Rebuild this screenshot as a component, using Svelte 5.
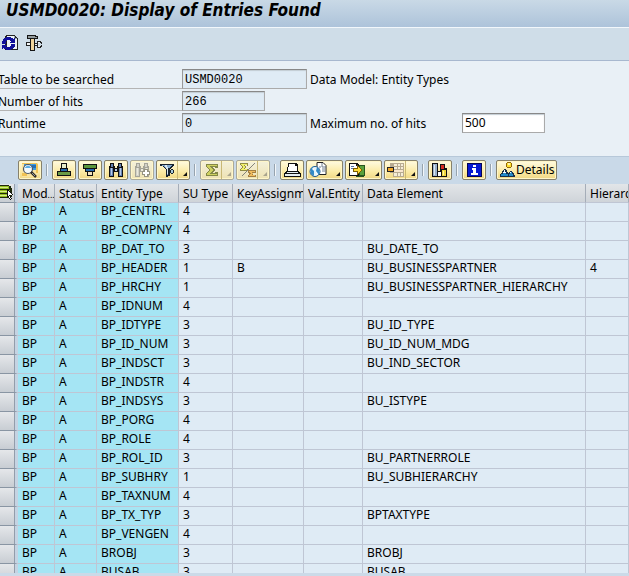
<script>
  const columns = [
    { name: 'Mod', more: true, width: 37 },
    { name: 'Status', width: 42 },
    { name: 'Entity Type', width: 82 },
    { name: 'SU Type', width: 54 },
    { name: 'KeyAssignm', width: 71 },
    { name: 'Val.Entity', width: 59 },
    { name: 'Data Element', width: 223 },
    { name: 'Hierarchy', width: 0 }
  ];

  const entries = [
    ['BP_CENTRL', '4', '', '', ''],
    ['BP_COMPNY', '4', '', '', ''],
    ['BP_DAT_TO', '3', '', 'BU_DATE_TO', ''],
    ['BP_HEADER', '1', 'B', 'BU_BUSINESSPARTNER', '4'],
    ['BP_HRCHY', '1', '', 'BU_BUSINESSPARTNER_HIERARCHY', ''],
    ['BP_IDNUM', '4', '', '', ''],
    ['BP_IDTYPE', '3', '', 'BU_ID_TYPE', ''],
    ['BP_ID_NUM', '3', '', 'BU_ID_NUM_MDG', ''],
    ['BP_INDSCT', '3', '', 'BU_IND_SECTOR', ''],
    ['BP_INDSTR', '4', '', '', ''],
    ['BP_INDSYS', '3', '', 'BU_ISTYPE', ''],
    ['BP_PORG', '4', '', '', ''],
    ['BP_ROLE', '4', '', '', ''],
    ['BP_ROL_ID', '3', '', 'BU_PARTNERROLE', ''],
    ['BP_SUBHRY', '1', '', 'BU_SUBHIERARCHY', ''],
    ['BP_TAXNUM', '4', '', '', ''],
    ['BP_TX_TYP', '3', '', 'BPTAXTYPE', ''],
    ['BP_VENGEN', '4', '', '', ''],
    ['BROBJ', '3', '', 'BROBJ', ''],
    ['BUSAB', '3', '', 'BUSAB', '']
  ];

  const tools = [
    { id: 'find', label: 'Details view' },
    null,
    { id: 'asc', label: 'Sort ascending' },
    { id: 'desc', label: 'Sort descending' },
    { id: 'search', label: 'Find' },
    { id: 'next', label: 'Find next', off: true },
    { id: 'filter', label: 'Filter', menu: 'split' },
    null,
    { id: 'sum', label: 'Total', menu: 'split', off: true },
    { id: 'sub', label: 'Subtotal', menu: 'split', off: true },
    null,
    { id: 'print', label: 'Print' },
    { id: 'view', label: 'Views', menu: 'wide' },
    { id: 'export', label: 'Export', menu: 'wide' },
    { id: 'layout', label: 'Layout', menu: 'split' },
    null,
    { id: 'chart', label: 'Graphic' },
    null,
    { id: 'info', label: 'Information' },
    null,
    { id: 'details', label: 'Details', text: true }
  ];
</script>

{#snippet icon(id)}
  <svg class="icon" viewBox="0 0 18 16" aria-hidden="true" shape-rendering={id === 'find' || id === 'view' ? 'auto' : 'crispEdges'}>
    {#if id === 'find'}
      <path d="M1 1h16v14H1z" fill="#f8e3a0" /><path d="M1 1h15v1H1zM1 11h5v3H1zM15 2h2v9h-2z" fill="#f0c254" />
      <path d="M3 2h12v6H3z" fill="#3d9be0" /><path d="M11 3h4v3h-4z" fill="#2371b9" />
      <circle cx="7" cy="7" r="4.500" fill="#f4fafc" stroke="#4a5662" stroke-width="1.2" />
      <path d="M3.500 6q3.500-5 7 0z" fill="#5aaee8" />
      <path d="M10 10l5 5" stroke="#302a24" stroke-width="2.5" /><path d="M11 11l3 3" stroke="#8c98a4" />
    {:else if id === 'asc'}
      <path d="M6 1h6v5h1v3h3v5H2V9h3V6h1z" fill="#111" />
      <path d="M7 2h4v4H7z" fill="#e8edcb" /><path d="M6 7h6v2H6z" fill="#2669ac" /><path d="M3 10h12v3H3z" fill="#6a9a45" />
    {:else if id === 'desc'}
      <path d="M2 2h14v5h-2v3h-2v4H6v-4H4V7H2z" fill="#111" />
      <path d="M3 3h12v3H3z" fill="#5c963b" /><path d="M5 7h8v2H5z" fill="#2669ac" /><path d="M7 10h4v3H7z" fill="#f0e2bd" />
    {:else if id === 'search' || id === 'next'}
      <g>
        <path d="M3 1h4v3h1v2h2V4h1V1h4v3h1v11h-5v-5H7v5H2V4h1z" fill={id === 'next' ? '#a5a498' : '#111'} />
        <path d="M4 2h2v3H4zM12 2h2v3h-2zM3 6h3v8H3zM12 6h3v8h-3z" fill={id === 'next' ? '#d3d2c8' : '#6382b3'} />
        <path d="M4 6h1v7H4zM13 6h1v7h-1zM8 7h2v2H8z" fill={id === 'next' ? '#eceadc' : '#b8cbea'} />
      </g>
      {#if id === 'next'}<path d="M11 7h4v2h2v4h-2v2h-4v-2H9V9h2z" fill="#969381" /><path d="M12 8h2v2h2v2h-2v2h-2v-2h-2v-2h2z" fill="#fff" />{/if}
    {:else if id === 'filter'}
      <path d="M1 2h14v2h-1v1h-1v1h-1v1h-1v7H9v1H7V7H6V6H5V5H4V4H1z" fill="#18222d" />
      <path d="M3 3h10v1h-1v1h-1v1H6V5H5V4H3zM8 7h1v6H8z" fill="#81a7cb" /><path d="M6 3h2v2h1v7H8V7H7V5H6z" fill="#d6e6f0" />
      <path d="M12 7h2v1h1v3h-1v1h-2v-1h-1V8h1z" fill="#18222d" /><path d="M12 8h2v3h-2z" fill="#a8c9dc" />
    {:else if id === 'sum'}
      <path d="M3 2h12v4h-3V5H9l3 3-3 3h3v-1h3v4H3v-3l3-3-3-3z" fill="#848846" />
      <path d="M4 3h10v1H6l4 4-4 4h8v1H4v-2l3-3-3-3z" fill="#cfd160" />
    {:else if id === 'sub'}
      <path d="M1 1h8v3H8V3H6v1l1 1-1 1v1h3v2H1V7l2-2-2-2z" fill="#918c43" /><path d="M2 2h6v1H4l2 2-2 2h4v1H2V7l2-2-2-2z" fill="#f0ef69" />
      <path d="M9 8h8v3h-3v1l-1 1h4v2H9v-2l2-1-2-1z" fill="#a47f42" /><path d="M10 9h6v1h-4l2 2-2 1h4v1h-6v-1l2-1-2-2z" fill="#f1bc5e" />
      <path d="M15 1h1v1h-1v1h-1v1h-1v1h-1v1h-1v1h-1v1H9v1H8v1H7v1H6v1H5v1H4v1H3v-1h1v-1h1v-1h1v-1h1V9h1V8h1V7h1V6h1V5h1V4h1V3h1V2h1z" fill="#84847b" />
    {:else if id === 'print'}
      <path d="M5 1h8l2 2v6h1l2 3v3H1v-3l2-3h1z" fill="#101010" />
      <path d="M6 2h6v2h2v5H5z" fill="#fff" /><path d="M4 10h11v1H4zM2 12h15v2H2z" fill="#e5edf0" />
    {:else if id === 'view'}
      <path d="M8 .5h6l3 3v9H8z" fill="#fff" stroke="#222" /><path d="M13 1v4h4M10 5h2M13 7h3M13 9h3" fill="none" stroke="#718090" />
      <circle cx="6" cy="9.5" r="5" fill="#f4fbff" stroke="#19568d" /><path d="M5 4q-5 2-3 8l3 2V9L3 7zM8 5q4 3 2 8L7 9z" fill="#328ac7" />
      <path d="M6 5v9" stroke="#d7edf7" />
    {:else if id === 'export'}
      <path d="M8 3h9v11l-2 1H8z" fill="#28551f" /><path d="M12 4h4v9h-4z" fill="#5aa13b" />
      <path d="M1 1h8l2 2v11H1z" fill="#111" /><path d="M2 2h6v2h2v9H2z" fill="#fff" /><path d="M3 4h3v1H3zM3 6h2v1H3z" fill="#5475a6" />
      <path d="M5 6h4V3h1v1h1v1h1v1h1v1h1v2h-1v1h-1v1h-1v1h-1v1H9v-3H5z" fill="#7b5c05" />
      <path d="M6 7h4V5h1v1h1v1h1v2h-1v1h-1v1h-1V9H6z" fill="#ffdc36" />
    {:else if id === 'layout'}
      <path d="M3 1h14v14H6v-4H3z" fill="#b8ab91" />
      <path d="M7 2h3v2H7zM11 2h2v2h-2zM14 2h2v2h-2zM7 5h3v2H7zM11 5h2v2h-2zM14 5h2v2h-2zM7 11h3v3H7zM11 11h2v3h-2zM14 11h2v3h-2z" fill="#f5eed9" />
      <path d="M7 8h9v2H7z" fill="#f9e7d0" /><path d="M0 5h7v5H0z" fill="#232323" /><path d="M1 6h5v3H1z" fill="#f0a628" />
    {:else if id === 'chart'}
      <path d="M1 1h6v14H1zM6 9h6v6H6zM9 2h5v7H9zM12 6h4v9h-4z" fill="#111" />
      <path d="M2 2h4v12H2z" fill="#9bb3cd" /><path d="M3 3h1v10H3z" fill="#dce7ee" />
      <path d="M7 10h3v4H7z" fill="#fff" /><path d="M10 3h3v4h-3z" fill="#d92b20" /><path d="M11 8h4v6h-4z" fill="#efd73e" /><path d="M12 9h1v4h-1z" fill="#fff9a0" />
    {:else if id === 'info'}
      <path d="M2 1h15v14H2z" fill="#050552" /><path d="M3 2h13v12H3z" fill="#0719d1" />
      <path d="M8 3h3v2H8zM7 6h4v5h2v2H6v-2h2V8H7z" fill="#fff" />
    {:else if id === 'details'}
      <path d="M9 0h4v1h1v4h-1v1H9V5H8V1h1z" fill="#926807" /><path d="M9 1h4v4H9z" fill="#ffe12e" /><path d="M10 1h2v2h-2z" fill="#fff6ac" />
      <path d="M6 7h2v1h1v2h1v1h1v-1h1V9h2v1h1v1h1v2h1v2H2v-3h1v-1h1V9h1V8h1z" fill="#182f49" />
      <path d="M6 8h1v2h1v2h2v2H3v-2h2v-2h1zM12 10h2v2h1v2h-4v-2h1z" fill="#258ac6" /><path d="M6 8h1v2h1v1H5v-1h1zM12 10h1v1h-1z" fill="#fff" />
    {/if}
  </svg>
{/snippet}

<main>
  <h1>USMD0020: Display of Entries Found</h1>

  <nav aria-label="Application">
    <button class="plain" aria-label="Refresh">
      <svg width="16" height="16" viewBox="0 0 16 16" aria-hidden="true" shape-rendering="crispEdges">
        <path d="M4 0h9v1h1v1h1v1h1v12H3V1h1z" fill="#222" /><path d="M5 1h7v3h3v10H5z" fill="#eef4f7" /><path d="M12 1h1v2h2v1h-3z" fill="#93a1ab" />
        <path d="M4 2h5v1h2v1h1V3h1v5H8V7h1V6H8V5H5v1H4v3H0V6h1V4h1V3h2z" fill="#10109b" />
        <path d="M9 9h4v3h-1v1h-1v1H9v1H4v-1H2v-1H1v1H0v-4h5v1H4v1h4v-1h1z" fill="#10109b" />
      </svg>
    </button>
    <button class="plain" aria-label="Settings">
      <svg width="16" height="16" viewBox="0 0 16 16" aria-hidden="true" shape-rendering="crispEdges">
        <path d="M1 0h9v1h2v3H9v12H4V4H1z" fill="#151515" /><path d="M2 1h7v1h2v1H2z" fill="#929b9e" /><path d="M5 4h3v11H5z" fill="#efd49c" />
        <path d="M0 7h4v4H0zM9 8h2v3H9zM11 6h4v2h-3v3h3v2h-4z" fill="#222" /><path d="M1 8h3v2H1zM9 9h2v1H9zM12 7h2v1h-2zM12 11h2v1h-2z" fill="#f2f4f4" /><path d="M15 7h1v2h-1zM15 10h1v2h-1z" fill="#222" />
      </svg>
    </button>
  </nav>

  <form onsubmit={(e) => e.preventDefault()}>
    <div class="field">
      <label class="lined" for="table">Table to be searched</label>
      <input id="table" class="mono" value="USMD0020" readonly />
      <span class="note">Data Model: Entity Types</span>
    </div>
    <div class="field">
      <label class="lined" for="hits">Number of hits</label>
      <input id="hits" class="mono short" value="266" readonly />
    </div>
    <div class="field">
      <label class="lined" for="runtime">Runtime</label>
      <input id="runtime" class="mono" value="0" readonly />
      <label class="note" for="max">Maximum no. of hits</label>
      <input id="max" class="short" value="500" />
    </div>
  </form>

  <section class="tools" aria-label="List functions">
    {#each tools as tool}
      {#if tool}
        <button class="tool" class:split={tool.menu === 'split'} class:wide={tool.menu === 'wide'} class:text={tool.text} class:off={tool.off} disabled={tool.off} aria-label={tool.label}>
          {@render icon(tool.id)}
          {#if tool.text}<span>{tool.label}</span>{/if}
          {#if tool.menu}<span class="arrow"></span>{/if}
        </button>
      {:else}
        <span class="sep"></span>
      {/if}
    {/each}
  </section>

  <div class="list">
    <table>
      <colgroup>
        <col style:width="18px" />
        {#each columns as column}
          <col style:width={column.width ? `${column.width}px` : 'auto'} />
        {/each}
      </colgroup>
      <thead>
        <tr>
          <th class="select">
            <button class="all" aria-label="Select all">
              <svg width="13" height="16" viewBox="0 0 13 16" aria-hidden="true" shape-rendering="crispEdges">
                <path d="M0 1h9v1h2v2h1v9h-2v1H0z" fill="#202a0c" /><path d="M0 2h9v3H0zM0 6h10v3H0zM0 10h9v3H0z" fill="#91bd22" />
                <path d="M0 3h8v1H0zM0 7h8v1H0zM0 11h7v1H0z" fill="#d9ed87" />
                <path d="M7 5l6 6h-3l2 4-2 1-2-4-1 1z" fill="#111" /><path d="M8 7l4 4H9l2 4h-1l-2-4z" fill="#fff" />
              </svg>
            </button>
          </th>
          {#each columns as column}
            <th scope="col">{column.name}{#if column.more}<span class="more">...</span>{/if}</th>
          {/each}
        </tr>
      </thead>
      <tbody>
        {#each entries as [entity, su, key, element, hierarchy]}
          <tr>
            <td class="select"></td>
            <td class="key">BP</td>
            <td class="key">A</td>
            <td class="key">{entity}</td>
            <td>{su}</td>
            <td>{key}</td>
            <td></td>
            <td>{element}</td>
            <td>{hierarchy}</td>
          </tr>
        {/each}
      </tbody>
    </table>
  </div>
</main>

<style>
  :global(body) {
    margin: 0;
  }
  main {
    box-sizing: border-box;
    height: 100vh;
    display: flex;
    flex-direction: column;
    overflow: hidden;
    border-bottom: 3px solid #cbdae8;
    background: #e9f0f6;
    color: #000;
    font: 12px/16px 'Noto Sans', sans-serif;
  }
  h1 {
    flex: none;
    box-sizing: border-box;
    height: 28px;
    margin: 0;
    padding-left: 6px;
    border-bottom: 1px solid #f2f7fb;
    background: linear-gradient(#c9d9e6, #adc3da);
    font: italic bold 17px/20px 'DejaVu Sans Condensed', 'DejaVu Sans', sans-serif;
    white-space: nowrap;
  }
  button,
  input {
    box-sizing: border-box;
    font: inherit;
    color: inherit;
  }
  nav {
    flex: none;
    box-sizing: border-box;
    display: flex;
    align-items: center;
    gap: 8px;
    height: 33px;
    padding: 0 2px 2px;
    border-bottom: 1px solid #a8b8cf;
    background: #cfdde8;
  }
  .plain {
    display: block;
    width: 16px;
    height: 16px;
    padding: 0;
    border: 0;
    background: none;
  }
  .plain svg,
  .all svg {
    display: block;
  }
  form {
    flex: none;
    display: flex;
    flex-direction: column;
    gap: 2px;
    padding: 8px 0 23px;
  }
  .field {
    display: flex;
    height: 20px;
    line-height: 22px;
    white-space: nowrap;
  }
  .lined {
    box-sizing: border-box;
    flex: none;
    width: 182px;
    border-bottom: 1px solid #b4b4b4;
    text-indent: -2px;
  }
  input {
    flex: none;
    width: 125px;
    padding: 0 2px;
    border: 1px solid #aaa;
    border-top-color: #888;
    border-left-color: #999;
    border-radius: 0;
    background: #fff;
    box-shadow: inset 0 1px 1px #c3ccd3;
    outline: 0;
  }
  input:read-only {
    background: #dfebf5;
  }
  .short {
    width: 83px;
  }
  .mono {
    padding-top: 2px;
    font: 12px/16px 'Liberation Mono', monospace;
  }
  .note {
    box-sizing: border-box;
    width: 155px;
    padding-left: 3px;
  }
  .tools {
    flex: none;
    box-sizing: border-box;
    display: flex;
    align-items: flex-start;
    gap: 2px;
    height: 28px;
    padding: 3px 0 0 18px;
    border-top: 1px solid #b7c8d9;
    background: #c9d9e8;
  }
  .tool {
    flex: none;
    display: flex;
    align-items: center;
    width: 24px;
    height: 20px;
    padding: 0 2px;
    border: 1px solid #86816c;
    border-radius: 2px;
    background: linear-gradient(#fffbe2, #fbeaa4 60%, #f0d784);
    box-shadow: inset 0 0 0 1px #fff6c8;
  }
  .icon {
    flex: none;
    width: 18px;
    height: 16px;
  }
  .split {
    width: 34px;
  }
  .wide {
    width: 37px;
  }
  .text {
    width: 61px;
    padding: 0 1px;
    white-space: nowrap;
  }
  .off {
    border-color: #aaa99b;
    background: linear-gradient(#f4f1dc, #eee2b2);
  }
  .arrow {
    box-sizing: border-box;
    flex: 1;
    height: 18px;
    display: flex;
    align-items: flex-end;
    justify-content: flex-end;
    padding-bottom: 3px;
  }
  .split .arrow {
    border-left: 1px solid #c9b875;
  }
  .arrow::after {
    content: '';
    border-left: 4px solid transparent;
    border-bottom: 4px solid #111;
  }
  .off .arrow::after {
    border-bottom-color: #aaa58e;
  }
  .sep {
    box-sizing: border-box;
    flex: none;
    width: 2px;
    height: 12px;
    margin: 4px 2px;
    border-left: 1px solid #96a3ae;
    border-right: 1px solid #f2f6f9;
  }
  .list {
    flex: 1;
    min-height: 0;
    overflow: hidden;
  }
  table {
    width: 100%;
    table-layout: fixed;
    border-collapse: separate;
    border-spacing: 0;
  }
  th,
  td {
    box-sizing: border-box;
    height: 19px;
    padding: 0 0 0 4px;
    border-right: 1px solid #bfc6d4;
    border-bottom: 1px solid #bfc6d4;
    background: #dfebf5;
    font-weight: normal;
    line-height: 16px;
    text-align: left;
    vertical-align: top;
    white-space: nowrap;
    overflow: hidden;
  }
  th {
    padding-top: 1px;
    border-right-color: #a5adb8;
    background: linear-gradient(#e2e5e8, #cfd4d9);
    line-height: 17px;
  }
  .key {
    background: #a5e5f4;
  }
  .select {
    padding: 0;
    border-right: 3px solid #c5d3e2;
    border-bottom-color: #8995a3;
    background: linear-gradient(#e5e7ea, #c8cdd3);
    box-shadow: inset -1px 0 #929dab;
  }
  .all {
    display: block;
    width: 13px;
    height: 16px;
    padding: 0;
    border: 0;
    background: none;
  }
  .more {
    font-size: 9px;
    line-height: 1;
  }
</style>
